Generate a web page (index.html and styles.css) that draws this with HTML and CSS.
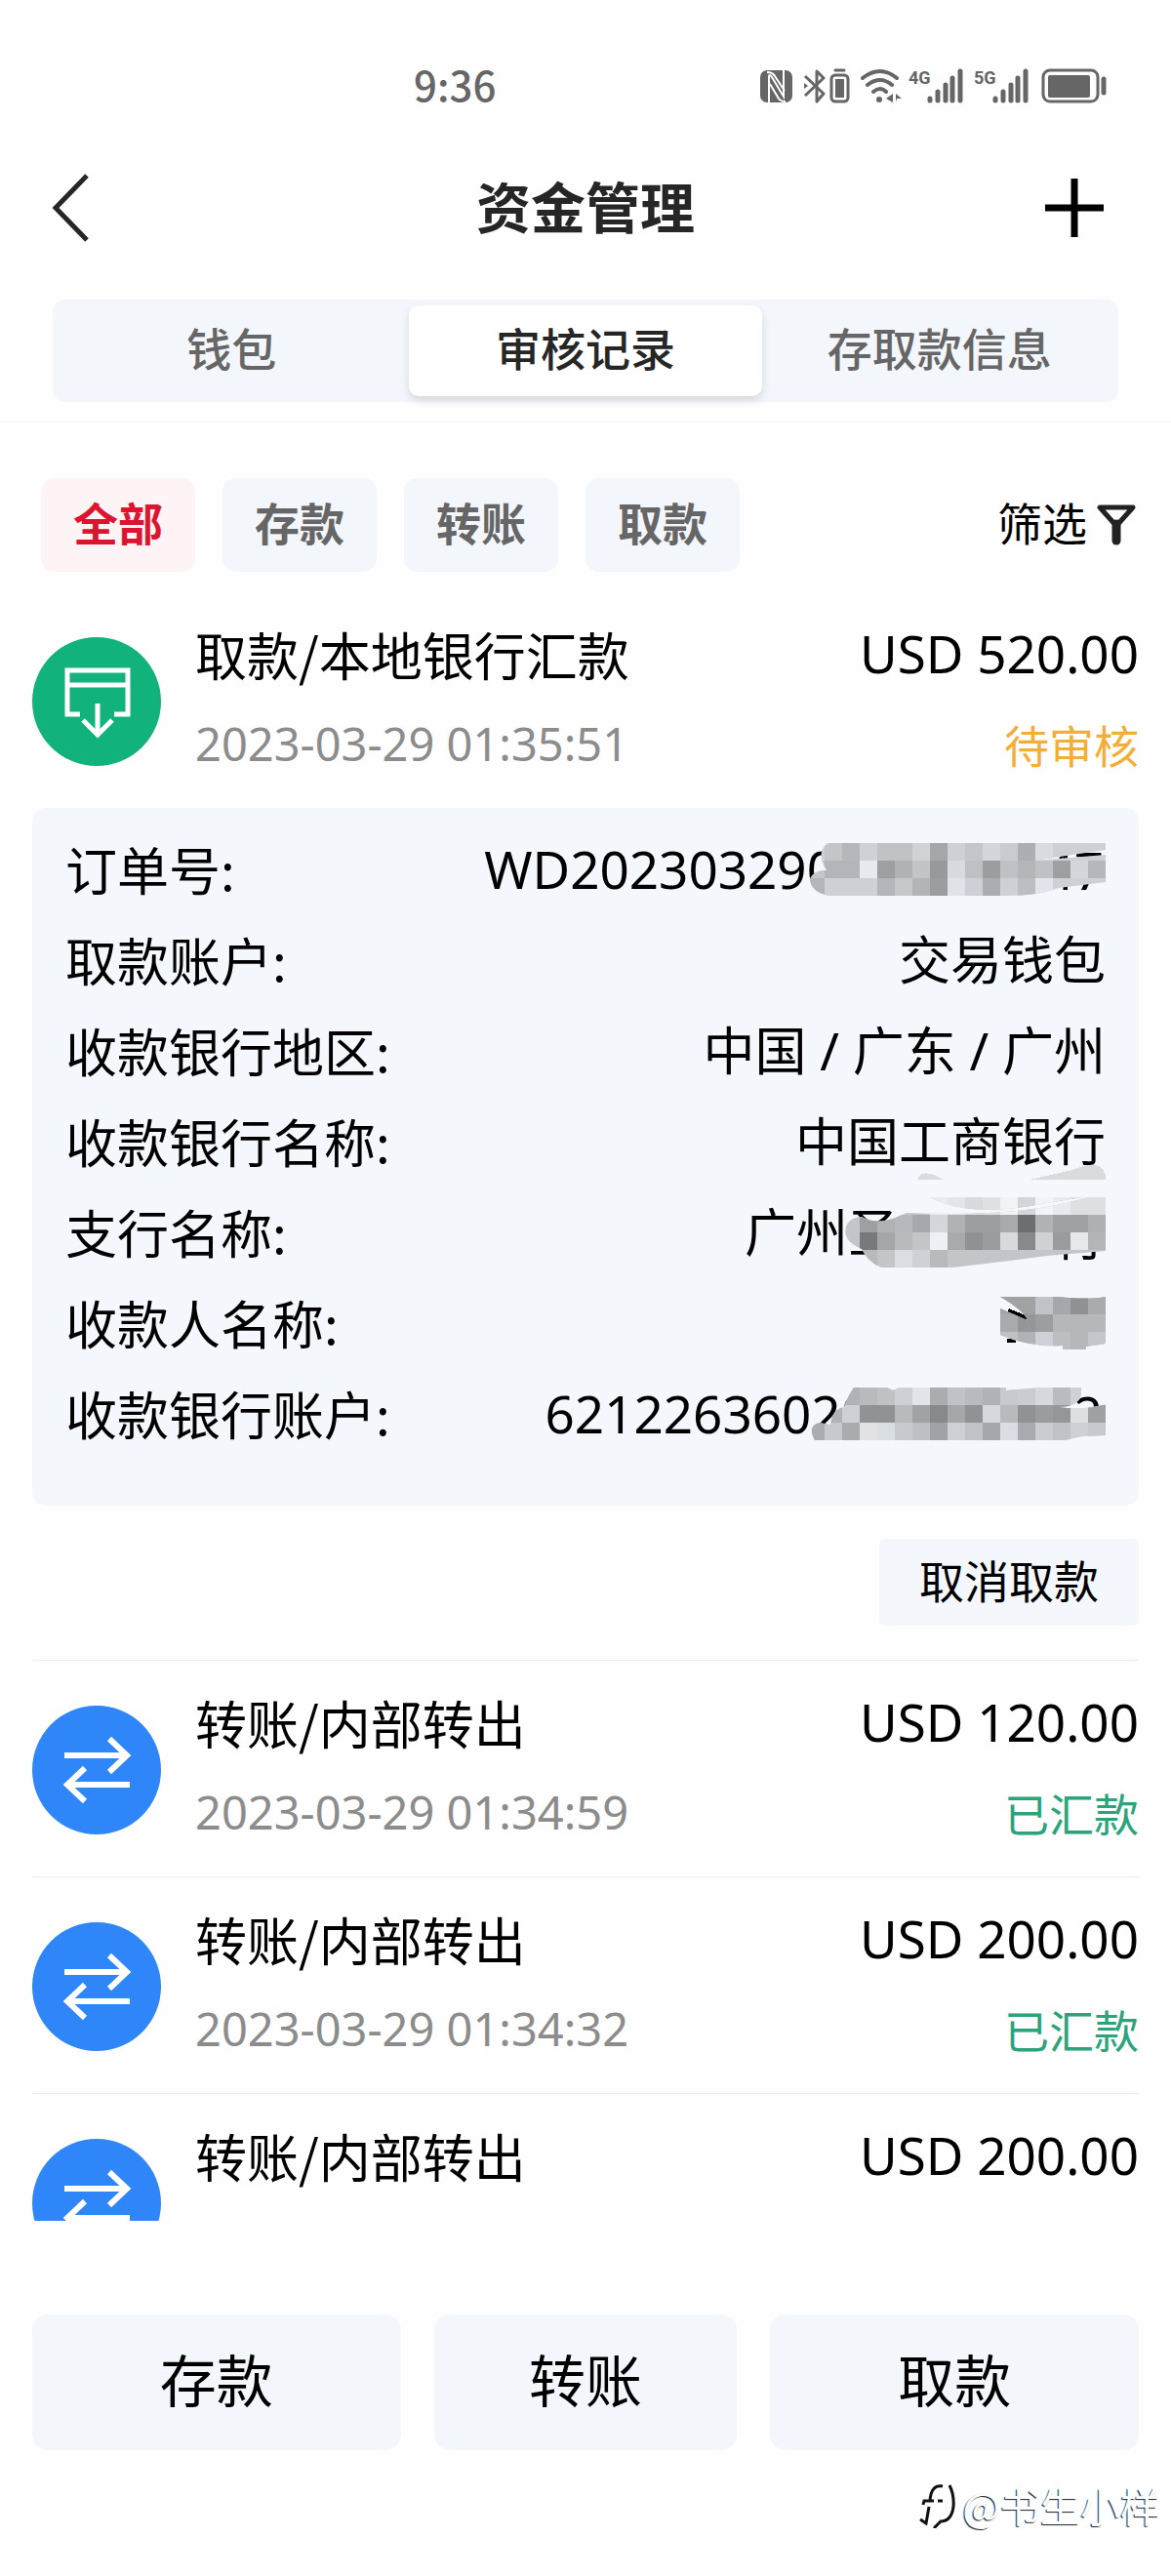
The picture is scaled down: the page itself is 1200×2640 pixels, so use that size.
FILE: index.html
```html
<!DOCTYPE html>
<html lang="zh-CN">
<head>
    <meta charset="UTF-8">
    <meta name="viewport" content="width=device-width, initial-scale=1">
    <title>资金管理</title>
    <link rel="stylesheet" href="styles.css">
</head>
<body>
    <!-- 状态栏 -->
    <div class="status-bar">
        <span class="time">9:36</span>
        <svg class="status-icons" width="356" height="36" viewBox="777 70 356 36" fill="none" stroke="#666" aria-hidden="true">
            <!-- NFC -->
            <rect x="778" y="72" width="33" height="33" rx="7" fill="#666" stroke="none"/>
            <path d="M787 105V79q0-4 3 0l12 20V72" stroke="#fff" stroke-width="2"/>
            <path d="M785 74q6 0 8 4l10 15M788 86l9 15q2 3 7 3" stroke="#fff" stroke-width="2"/>
            <!-- 蓝牙 -->
            <path d="M824 78l19 18-7 8V73l7 7-19 18" stroke-width="3" stroke-linejoin="round"/>
            <path d="M823 85l4 3-4 3z" fill="#666" stroke="none"/>
            <path d="M855 72h9" stroke-width="3" stroke-linecap="round"/>
            <rect x="851" y="77" width="17" height="27" rx="4" stroke-width="3"/>
            <rect x="855" y="81" width="9" height="19" fill="#666" stroke="none"/>
            <!-- WiFi -->
            <path d="M883 80q18-14 35 0M888 87q13-10 25 0M894 94q7-6 13 0" stroke-width="4" stroke-linecap="round"/>
            <circle cx="900" cy="102" r="3" fill="#666" stroke="none"/>
            <path d="M914 96v9l-7-4zM917 96v9l1-4 5 0z" fill="#666" stroke="none"/>
            <!-- 信号 -->
            <text x="930" y="86" class="net">4G</text>
            <path d="M952 101v2M960 94v9M968 87v16M975 80v23M983 73v30" stroke-width="5" stroke-linecap="round"/>
            <text x="997" y="86" class="net">5G</text>
            <path d="M1019 101v2M1027 94v9M1035 87v16M1042 80v23M1050 73v30" stroke-width="5" stroke-linecap="round"/>
            <!-- 电量 -->
            <rect x="1068" y="72" width="56" height="32" rx="7" stroke-width="3"/>
            <rect x="1073" y="77" width="43" height="23" rx="2" fill="#666" stroke="none"/>
            <path d="M1130 81v14" stroke-width="5" stroke-linecap="round"/>
        </svg>
    </div>

    <!-- 标题栏 -->
    <header class="nav">
        <button class="icon-btn" aria-label="返回">
            <svg width="40" height="72" viewBox="0 0 40 72" fill="none" stroke="#262626" stroke-width="5">
                <path d="M37 3L5 36l32 33"/>
            </svg>
        </button>
        <h1>资金管理</h1>
        <button class="icon-btn" aria-label="添加">
            <svg width="60" height="60" viewBox="0 0 60 60" fill="none" stroke="#000" stroke-width="7">
                <path d="M30 0v60M0 30h60"/>
            </svg>
        </button>
    </header>

    <!-- 顶部标签 -->
    <nav class="tabs-wrap">
        <div class="tabs">
            <button class="tab">钱包</button>
            <button class="tab active">审核记录</button>
            <button class="tab">存取款信息</button>
        </div>
    </nav>

    <!-- 类型筛选 -->
    <div class="filters">
        <button class="chip active">全部</button>
        <button class="chip">存款</button>
        <button class="chip">转账</button>
        <button class="chip">取款</button>
        <button class="filter-btn">
            <span>筛选</span>
            <svg width="40" height="42" viewBox="0 0 40 42" fill="none" stroke="#222" stroke-linejoin="round" aria-hidden="true">
                <path d="M3 3h34L20 22z" stroke-width="5"/>
                <path d="M20 20v17" stroke-width="9" stroke-linecap="round"/>
            </svg>
        </button>
    </div>

    <!-- 记录列表 -->
    <ul class="records">
        <li>
            <div class="record">
                <svg class="badge" viewBox="0 0 133 133" fill="none" stroke="#fff" stroke-width="5" aria-hidden="true">
                    <circle cx="66" cy="66" r="66" fill="#12b27c" stroke="none"/>
                    <path d="M49 79H36V34h62v45H84M36 49h62"/>
                    <path d="M67 68v31M52 85l15 15 15-15"/>
                </svg>
                <div class="info">
                    <div class="line">
                        <span>取款/本地银行汇款</span>
                        <span class="amount">USD 520.00</span>
                    </div>
                    <div class="line sub">
                        <time>2023-03-29 01:35:51</time>
                        <span class="pending">待审核</span>
                    </div>
                </div>
            </div>
            <dl class="detail">
                <div>
                    <dt>订单号:</dt>
                    <dd>WD202303290<svg class="mask mask-long" width="306" height="54" viewBox="0 0 306 54" aria-hidden="true">
                            <clipPath id="m1"><path d="M22 0H306V7L232 18 306 12V40L258 46Q236 54 206 54H22Q4 50 3 37 6 28 20 28 8 8 22 0z"/></clipPath>
                            <text x="304" y="48" text-anchor="end">47</text>
                            <g clip-path="url(#m1)"><g class="cells">
                                <rect width="306" height="54" fill="#cdd0d4" class="base"/>
                                <rect x="1" y="0" fill="#c3c5c8"/><rect x="2" y="0" fill="#b5b7ba"/><rect x="3" y="0" fill="#cfd1d5"/><rect x="4" y="0" fill="#c0c2c5"/><rect x="5" y="0" fill="#c0c2c5"/><rect x="6" y="0" fill="#d0d2d5"/><rect x="7" y="0" fill="#a5a6a8"/><rect x="9" y="0" fill="#c4c6c9"/><rect x="10" y="0" fill="#d3d6da"/><rect x="11" y="0" fill="#c8cbcf"/><rect x="12" y="0" fill="#acaeb0"/><rect x="13" y="0" fill="#d8dbdf"/>
                                <rect x="0" y="1" fill="#c3c5c8"/><rect x="1" y="1" fill="#b3b5b8"/><rect x="2" y="1" fill="#b3b5b8"/><rect x="3" y="1" fill="#e6e9ed"/><rect x="4" y="1" fill="#9d9fa1"/><rect x="5" y="1" fill="#b0b2b4"/><rect x="6" y="1" fill="#c2c4c7"/><rect x="7" y="1" fill="#98999b"/><rect x="8" y="1" fill="#d8dbde"/><rect x="9" y="1" fill="#bec0c3"/><rect x="10" y="1" fill="#9c9d9f"/><rect x="11" y="1" fill="#bfc1c4"/><rect x="12" y="1" fill="#b3b5b8"/><rect x="13" y="1" fill="#bfc1c5"/><rect x="14" y="1" fill="#9d9fa1"/><rect x="15" y="1" fill="#d3d6da"/><rect x="16" y="1" fill="#b5b7ba"/>
                                <rect x="0" y="2" fill="#b3b5b8"/><rect x="4" y="2" fill="#b3b5b8"/><rect x="5" y="2" fill="#c5c7ca"/><rect x="6" y="2" fill="#b3b4b6"/><rect x="7" y="2" fill="#9c9d9f"/><rect x="8" y="2" fill="#dfe2e6"/><rect x="10" y="2" fill="#abadaf"/><rect x="12" y="2" fill="#bcbec1"/><rect x="13" y="2" fill="#e2e5e9"/>
                            </g></g>
                        </svg></dd>
                </div>
                <div>
                    <dt>取款账户:</dt>
                    <dd>交易钱包</dd>
                </div>
                <div>
                    <dt>收款银行地区:</dt>
                    <dd>中国 / 广东 / 广州</dd>
                </div>
                <div>
                    <dt>收款银行名称:</dt>
                    <dd>中国工商银行</dd>
                </div>
                <div>
                    <dt>支行名称:</dt>
                    <dd>广州圣<svg class="mask mask-branch" width="270" height="72" viewBox="0 0 270 72" aria-hidden="true">
                            <clipPath id="m2"><path d="M90 0H270V55L210 60Q150 68 112 72H40Q26 66 20 53 0 45 4 30 8 20 20 20 34 28 52 22L66 16Q160 20 220 8L270 -4 210 6Q130 22 90 0z"/></clipPath>
                            <text x="270" y="60" text-anchor="end">行</text>
                            <path d="M77 -18Q80 -28 94 -23L104 -18zM192 -18L236 -28Q270 -42 270 -18z" fill="#d9dbdd"/>
                            <g clip-path="url(#m2)"><g class="cells">
                                <rect width="270" height="72" fill="#c3c5c8" class="base"/>
                                <rect x="5" y="0" fill="#e9ecef"/><rect x="6" y="0" fill="#e3e6e9"/><rect x="7" y="0" fill="#d8dbde"/><rect x="8" y="0" fill="#dfe2e5"/><rect x="9" y="0" fill="#f1f3f6"/><rect x="10" y="0" fill="#d3d6d9"/><rect x="11" y="0" fill="#f1f3f6"/><rect x="12" y="0" fill="#e8ebee"/><rect x="13" y="0" fill="#dddfe2"/><rect x="14" y="0" fill="#dddfe2"/>
                                <rect x="1" y="1" fill="#9d9fa1"/><rect x="2" y="1" fill="#b0b2b4"/><rect x="3" y="1" fill="#b6b8bb"/><rect x="4" y="1" fill="#a5a9ad"/><rect x="5" y="1" fill="#d3d6da"/><rect x="6" y="1" fill="#b0b2b4"/><rect x="7" y="1" fill="#9c9ea0"/><rect x="8" y="1" fill="#9c9ea0"/><rect x="9" y="1" fill="#a8aaac"/><rect x="10" y="1" fill="#6c6e70"/><rect x="11" y="1" fill="#b0b2b4"/><rect x="12" y="1" fill="#9fa1a3"/><rect x="13" y="1" fill="#9fa1a3"/><rect x="14" y="1" fill="#aeb0b2"/>
                                <rect x="1" y="2" fill="#77797b"/><rect x="2" y="2" fill="#a5a6a8"/><rect x="3" y="2" fill="#b8babd"/><rect x="5" y="2" fill="#eef0f3"/><rect x="6" y="2" fill="#a8aaad"/><rect x="7" y="2" fill="#8f9292"/><rect x="8" y="2" fill="#9a9c9d"/><rect x="9" y="2" fill="#d8dbde"/><rect x="10" y="2" fill="#88898b"/><rect x="11" y="2" fill="#cfd1d4"/><rect x="12" y="2" fill="#9a9c9e"/><rect x="13" y="2" fill="#e6e8eb"/><rect x="14" y="2" fill="#b3b5b8"/>
                                <rect x="1" y="3" fill="#b8babc"/><rect x="3" y="3" fill="#dadde1"/><rect x="4" y="3" fill="#cfd1d4"/><rect x="5" y="3" fill="#b8babd"/>
                            </g></g>
                        </svg></dd>
                </div>
                <div>
                    <dt>收款人名称:</dt>
                    <dd><svg class="mask" width="108" height="54" viewBox="0 0 108 54" aria-hidden="true">
                            <clipPath id="m3"><path d="M0 0H60Q90 3 108 0V48L88 51V54H64V50Q30 52 0 39V12L28 24Q24 14 0 0z"/></clipPath>
                            <path d="M8 14l20 8M7 45h9" stroke="#000" stroke-width="4"/>
                            <g clip-path="url(#m3)"><g class="cells">
                                <rect width="108" height="54" fill="#b5b7ba" class="base"/>
                                <rect x="0" y="0" fill="#a0a2a4"/><rect x="1" y="0" fill="#a0a2a4"/><rect x="2" y="0" fill="#c0c3c7"/><rect x="3" y="0" fill="#a5a7aa"/><rect x="4" y="0" fill="#8f9193"/><rect x="5" y="0" fill="#a8aaac"/>
                                <rect x="0" y="1" fill="#a8aaad"/><rect x="1" y="1" fill="#949698"/><rect x="2" y="1" fill="#9c9ea0"/>
                                <rect x="0" y="2" fill="#bfc1c4"/><rect x="1" y="2" fill="#b0b2b5"/><rect x="2" y="2" fill="#cdd0d4"/><rect x="3" y="2" fill="#bcbec1"/><rect x="5" y="2" fill="#c3c6ca"/>
                            </g></g>
                        </svg></dd>
                </div>
                <div>
                    <dt>收款银行账户:</dt>
                    <dd>62122636020<svg class="mask mask-card" width="306" height="54" viewBox="0 0 306 54" aria-hidden="true">
                            <clipPath id="m4"><path d="M48 0H82L88 3 94 0H204V3L240 0H281V8Q278 20 258 20 282 24 306 17V49L282 50Q268 54 260 54H8Q0 40 12 36L24 38Q26 22 38 20 42 8 48 0z"/></clipPath>
                            <text x="303" y="48" text-anchor="end">2</text>
                            <g clip-path="url(#m4)"><g class="cells">
                                <rect width="306" height="54" fill="#cdd0d4" class="base"/>
                                <rect x="2" y="0" fill="#b0b2b5"/><rect x="3" y="0" fill="#b8babd"/><rect x="4" y="0" fill="#bfc1c4"/><rect x="6" y="0" fill="#e2e5e8"/><rect x="7" y="0" fill="#aaacaf"/><rect x="8" y="0" fill="#bfc2c6"/><rect x="9" y="0" fill="#b8babe"/><rect x="10" y="0" fill="#b0b3b6"/><rect x="11" y="0" fill="#c6c9cd"/><rect x="12" y="0" fill="#c9ccd1"/><rect x="13" y="0" fill="#d5d9de"/><rect x="14" y="0" fill="#b8bbbf"/>
                                <rect x="1" y="1" fill="#b0b2b5"/><rect x="3" y="1" fill="#909294"/><rect x="4" y="1" fill="#909294"/><rect x="5" y="1" fill="#b8babd"/><rect x="6" y="1" fill="#a0a3a6"/><rect x="7" y="1" fill="#87898b"/><rect x="8" y="1" fill="#a5a8ab"/><rect x="9" y="1" fill="#909294"/><rect x="10" y="1" fill="#d5d9de"/><rect x="11" y="1" fill="#b8babd"/><rect x="12" y="1" fill="#909294"/><rect x="13" y="1" fill="#9a9c9f"/><rect x="14" y="1" fill="#949698"/><rect x="15" y="1" fill="#dddfe2"/><rect x="16" y="1" fill="#9fa1a4"/>
                                <rect x="0" y="2" fill="#aaacaf"/><rect x="1" y="2" fill="#c6c9cd"/><rect x="2" y="2" fill="#a9abae"/><rect x="3" y="2" fill="#e2e2e4"/><rect x="4" y="2" fill="#dadde1"/><rect x="5" y="2" fill="#c6c9cd"/><rect x="6" y="2" fill="#bcbfc3"/><rect x="7" y="2" fill="#a0a2a5"/><rect x="9" y="2" fill="#bfc2c6"/><rect x="10" y="2" fill="#a5a7aa"/><rect x="11" y="2" fill="#dadde1"/><rect x="12" y="2" fill="#a9abae"/><rect x="13" y="2" fill="#c9ccd0"/><rect x="14" y="2" fill="#bfc2c6"/><rect x="16" y="2" fill="#c6c9cd"/>
                            </g></g>
                        </svg></dd>
                </div>
            </dl>
            <div class="actions">
                <button class="cancel-btn">取消取款</button>
            </div>
        </li>
        <li>
            <div class="record">
                <svg class="badge" viewBox="0 0 133 133" fill="none" stroke="#fff" stroke-width="6" aria-hidden="true">
                    <circle cx="66" cy="66" r="66" fill="#2f86f8" stroke="none"/>
                    <path d="M33 51h64M79 34l18 17-18 17M100 81H36M54 64L36 81l18 17"/>
                </svg>
                <div class="info">
                    <div class="line">
                        <span>转账/内部转出</span>
                        <span class="amount">USD 120.00</span>
                    </div>
                    <div class="line sub">
                        <time>2023-03-29 01:34:59</time>
                        <span class="done">已汇款</span>
                    </div>
                </div>
            </div>
        </li>
        <li>
            <div class="record">
                <svg class="badge" viewBox="0 0 133 133" fill="none" stroke="#fff" stroke-width="6" aria-hidden="true">
                    <circle cx="66" cy="66" r="66" fill="#2f86f8" stroke="none"/>
                    <path d="M33 51h64M79 34l18 17-18 17M100 81H36M54 64L36 81l18 17"/>
                </svg>
                <div class="info">
                    <div class="line">
                        <span>转账/内部转出</span>
                        <span class="amount">USD 200.00</span>
                    </div>
                    <div class="line sub">
                        <time>2023-03-29 01:34:32</time>
                        <span class="done">已汇款</span>
                    </div>
                </div>
            </div>
        </li>
        <li>
            <div class="record">
                <svg class="badge" viewBox="0 0 133 133" fill="none" stroke="#fff" stroke-width="6" aria-hidden="true">
                    <circle cx="66" cy="66" r="66" fill="#2f86f8" stroke="none"/>
                    <path d="M33 51h64M79 34l18 17-18 17M100 81H36M54 64L36 81l18 17"/>
                </svg>
                <div class="info">
                    <div class="line">
                        <span>转账/内部转出</span>
                        <span class="amount">USD 200.00</span>
                    </div>
                </div>
            </div>
        </li>
    </ul>

    <!-- 底部操作 -->
    <footer class="bottom">
        <div class="bottom-btns">
            <button>存款</button>
            <button>转账</button>
            <button>取款</button>
        </div>
        <div class="watermark">
            <svg width="38" height="48" viewBox="0 0 38 48" fill="none" stroke="#111" aria-hidden="true">
                <path d="M24 5Q12 3 11 20M4 24l1-4h10M10 26L7 43l-6-4M19 20h5" stroke-width="3"/>
                <path d="M31 4Q36 14 35 26 33 41 22 41L15 48" stroke-width="3"/>
            </svg>
            <span>@书生小样</span>
        </div>
    </footer>
</body>
</html>
```

FILE: styles.css
```css
* {
    box-sizing: border-box;
}

body {
    margin: 0;
    height: 100vh;
    display: flex;
    flex-direction: column;
    background-color: #fefefe;
    color: #000;
    font-family: "Noto Sans CJK SC", sans-serif;
    font-size: 46px;
    line-height: 64px;
}

button {
    border: none;
    padding: 0;
    background: none;
    color: inherit;
    font: inherit;
    cursor: pointer;
}

svg {
    display: block;
    flex: none;
}

/* 状态栏 */
.status-bar {
    display: flex;
    justify-content: space-between;
    align-items: center;
    height: 176px;
    padding: 0 66px 0 424px;
    color: #666;
}

.time {
    padding-bottom: 4px;
    font-size: 42px;
    font-weight: 500;
}

.net {
    font: bold 18px "Roboto", sans-serif;
    fill: #666;
    stroke: none;
}

/* 标题栏 */
.nav {
    display: grid;
    grid-template-columns: 1fr auto 1fr;
    align-items: center;
    height: 74px;
    padding: 0 69px 0 52px;
}

.nav h1 {
    margin: 0;
    padding: 0 0 6px 17px;
    color: #262626;
    font-size: 56px;
    font-weight: bold;
}

.icon-btn {
    justify-self: start;
}

.icon-btn:last-child {
    justify-self: end;
}

/* 顶部标签 */
.tabs-wrap {
    padding: 57px 54px 20px;
    border-bottom: 1px solid #f7f7f8;
}

.tabs {
    display: flex;
    padding: 6px 2px;
    border-radius: 12px;
    background-color: #f3f6fa;
}

.tab {
    flex: 1;
    height: 93px;
    padding-bottom: 10px;
    border-radius: 10px;
    color: #666;
    font-weight: 500;
}

.tab.active {
    background-color: #fff;
    box-shadow: 0 5px 10px rgba(0, 0, 0, 0.12);
    color: #262626;
}

/* 类型筛选 */
.filters {
    display: flex;
    align-items: center;
    gap: 28px;
    padding: 57px 36px 21px 42px;
}

.chip {
    padding: 12px 33px 20px;
    border-radius: 14px;
    background-color: #f3f6fb;
    color: #666;
    font-weight: bold;
}

.chip.active {
    background-color: #fff4f5;
    color: #dc1430;
}

.filter-btn {
    display: flex;
    align-items: center;
    gap: 10px;
    margin-left: auto;
}

.filter-btn span {
    padding-bottom: 8px;
}

/* 记录列表，超出部分由滚动区域裁剪 */
.records {
    flex: 1;
    min-height: 0;
    overflow: hidden;
    margin: 0 33px;
    padding: 0;
    list-style: none;
}

.records li + li {
    border-top: 1px solid #ededed;
}

.record {
    display: flex;
    align-items: flex-start;
    gap: 34px;
}

.badge {
    width: 133px;
    height: 133px;
    margin-top: 46px;
}

.info {
    flex: 1;
    padding: 31px 0 34px;
}

.line {
    display: flex;
    justify-content: space-between;
    font-size: 53px;
}

.amount {
    font-family: "Noto Sans", sans-serif;
}

.sub {
    margin-top: 28px;
    font-size: 46px;
}

.sub time {
    color: #8c8c8c;
    font-family: "Noto Sans", sans-serif;
    font-size: 47px;
}

.pending {
    color: #f5ae35;
}

.done {
    color: #2ba47b;
}

/* 订单详情 */
.detail {
    margin: 0;
    padding: 16px 34px 48px;
    border-radius: 14px;
    background-color: #f4f7fb;
    font-size: 53px;
    line-height: 93px;
}

.detail div {
    display: flex;
    justify-content: space-between;
}

.detail dd {
    display: flex;
    align-items: center;
    margin: 0;
    height: 93px;
    font-family: "Noto Sans", "Noto Sans CJK SC", sans-serif;
}

/* 打码区域 */
.mask {
    position: relative;
    overflow: visible;
    shape-rendering: crispEdges;
}

.mask-long {
    margin-left: -30px;
}

.mask-branch {
    margin-left: -59px;
}

.mask-card {
    margin-left: -65px;
}

.cells {
    transform: scale(18);
}

.cells rect {
    width: 1px;
    height: 1px;
}

.cells .base {
    width: 17px;
    height: 4px;
}

.actions {
    display: flex;
    justify-content: flex-end;
    padding: 34px 0 35px;
}

.cancel-btn {
    padding: 9px 41px 16px;
    border-radius: 6px;
    background-color: #f4f7fb;
}

/* 底部操作 */
.bottom {
    padding: 96px 33px 41px;
}

.bottom-btns {
    display: grid;
    grid-template-columns: 17fr 14fr 17fr;
    gap: 34px;
}

.bottom-btns button {
    height: 139px;
    padding-bottom: 10px;
    border-radius: 16px;
    background-color: #f3f6fa;
    font-size: 58px;
}

.watermark {
    display: flex;
    justify-content: flex-end;
    align-items: center;
    gap: 6px;
    margin: 24px -22px 0 0;
    color: #fff;
    font-size: 41px;
    text-shadow: -1px 1px 1px #222;
}
```
